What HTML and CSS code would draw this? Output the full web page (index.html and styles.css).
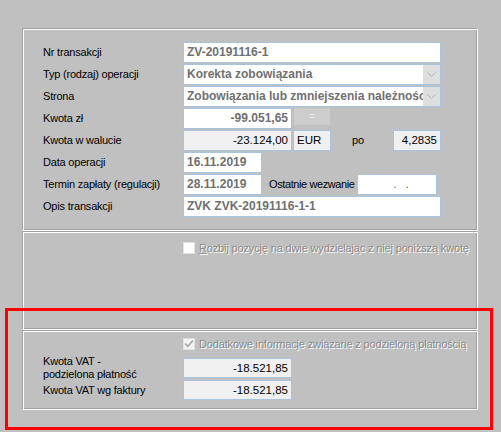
FILE: index.html
```html
<!DOCTYPE html>
<html lang="pl">
<head>
    <meta charset="utf-8">
    <link rel="stylesheet" href="styles.css">
</head>
<body>
    <div class="screen">
        <div class="panel panel-main">
            <div class="row">
                <span class="lbl">Nr transakcji</span>
                <div class="fld fld-full">ZV-20191116-1</div>
            </div>
            <div class="row">
                <span class="lbl">Typ (rodzaj) operacji</span>
                <div class="fld fld-full combo">
                    <span class="combo-text">Korekta zobowiązania</span>
                    <span class="combo-btn"><svg width="9" height="5" viewBox="0 0 9 5"><path d="M0.5 0.5 L4.5 4.5 L8.5 0.5" fill="none" stroke="#b4b4b4" stroke-width="1"/></svg></span>
                </div>
            </div>
            <div class="row">
                <span class="lbl">Strona</span>
                <div class="fld fld-full combo">
                    <span class="combo-text">Zobowiązania lub zmniejszenia należności</span>
                    <span class="combo-btn"><svg width="9" height="5" viewBox="0 0 9 5"><path d="M0.5 0.5 L4.5 4.5 L8.5 0.5" fill="none" stroke="#b4b4b4" stroke-width="1"/></svg></span>
                </div>
            </div>
            <div class="row">
                <span class="lbl">Kwota zł</span>
                <div class="fld fld-amount num">-99.051,65</div>
                <div class="eq-btn">=</div>
            </div>
            <div class="row">
                <span class="lbl">Kwota w walucie</span>
                <div class="fld fld-amount ro num">-23.124,00</div>
                <div class="fld fld-cur ro">EUR</div>
                <span class="po">po</span>
                <div class="fld fld-rate ro num">4,2835</div>
            </div>
            <div class="row">
                <span class="lbl">Data operacji</span>
                <div class="fld fld-date">16.11.2019</div>
            </div>
            <div class="row">
                <span class="lbl">Termin zapłaty (regulacji)</span>
                <div class="fld fld-date">28.11.2019</div>
                <span class="lbl-inline">Ostatnie wezwanie</span>
                <div class="fld fld-mask"><span>.</span><span>.</span></div>
            </div>
            <div class="row row-last">
                <span class="lbl">Opis transakcji</span>
                <div class="fld fld-full">ZVK ZVK-20191116-1-1</div>
            </div>
        </div>

        <div class="panel panel-split">
            <div class="check-row">
                <span class="chk"></span>
                <span class="dis-text"><u>R</u>ozbij pozycję na dwie wydzielając z niej poniższą kwotę</span>
            </div>
        </div>

        <div class="panel panel-vat">
            <div class="check-row">
                <span class="chk chk-on"><svg width="10" height="9" viewBox="0 0 10 9"><path d="M1 4.5 L3.8 7.3 L9 1.5" fill="none" stroke="#a8a8a8" stroke-width="1.6"/></svg></span>
                <span class="dis-text">Dodatkowe informacje związane z podzieloną płatnością</span>
            </div>
            <div class="vat-row">
                <span class="lbl">Kwota VAT -<br>podzielona płatność</span>
                <div class="fld fld-amount ro num">-18.521,85</div>
            </div>
            <div class="vat-row">
                <span class="lbl">Kwota VAT wg faktury</span>
                <div class="fld fld-amount ro num">-18.521,85</div>
            </div>
        </div>

        <div class="highlight"></div>
    </div>
</body>
</html>
```

FILE: styles.css
```css
/* Dialog: transakcja */
body {
    margin: 0;
    background-color: #c0c0c0;
    font-family: "Liberation Sans", Arial, sans-serif;
    font-size: 11px;
    color: #000;
}
.screen {
    position: relative;
    width: 501px;
    height: 432px;
    padding: 28px 0 0 22px;
    box-sizing: border-box;
}

/* etched frame */
.panel {
    width: 456px;
    box-sizing: border-box;
    border: 1px solid;
    border-color: #a0a0a0 #fff #fff #a0a0a0;
    box-shadow: inset 1px 1px 0 #fff, inset -1px -1px 0 #a0a0a0;
}
.panel-main {
    height: 203px;
    padding: 13px 0 0 20px;
}
.panel-split {
    height: 99px;
    padding: 9px 0 0 160px;
}
.panel-vat {
    height: 80px;
    padding: 6px 0 0 20px;
}

.row {
    display: flex;
    align-items: flex-start;
    height: 21px;
    margin-bottom: 1px;
}
.row-last {
    margin-top: 1px;
}
.lbl {
    width: 140px;
    flex-shrink: 0;
    line-height: 21px;
    letter-spacing: -0.2px;
}

/* fields */
.fld {
    box-sizing: border-box;
    height: 21px;
    border: 1px solid #a9c3de;
    background-color: #fff;
    padding: 0 3px;
    line-height: 19px;
    font-size: 12px;
    font-weight: bold;
    color: #707070;
    white-space: nowrap;
    overflow: hidden;
    flex-shrink: 0;
}
.fld.ro {
    background-color: #f0f0f0;
    font-weight: normal;
    color: #000;
    font-size: 11.5px;
}
.num {
    text-align: right;
}
.fld-full { width: 258px; }
.fld-amount { width: 109px; }
.fld-date { width: 79px; }
.fld-cur {
    width: 38px;
    margin-left: 1px;
}
.fld-rate { width: 48px; }
.fld-mask {
    width: 80px;
    display: flex;
    justify-content: center;
    gap: 9px;
    padding-left: 12px;
    font-weight: normal;
    color: #666;
}

.combo {
    display: flex;
    padding-right: 0;
}
.combo-text {
    flex: 1;
    overflow: hidden;
}
.combo-btn {
    width: 17px;
    height: 19px;
    background-color: #dedede;
    display: flex;
    align-items: center;
    justify-content: center;
}

.eq-btn {
    width: 36px;
    height: 17px;
    margin-left: 2px;
    background-color: #cdcdcd;
    color: #eaeaea;
    text-align: center;
    line-height: 17px;
    font-size: 11px;
}
.po {
    width: 62px;
    padding-left: 21px;
    box-sizing: border-box;
    line-height: 21px;
    font-size: 11px;
}
.lbl-inline {
    flex: none;
    padding: 0 2px 0 7px;
    line-height: 21px;
    letter-spacing: -0.4px;
    white-space: nowrap;
}

/* checkboxes */
.check-row {
    display: flex;
    align-items: center;
    height: 13px;
}
.panel-vat .check-row {
    margin-left: 140px;
    margin-bottom: 8px;
}
.chk {
    width: 12px;
    height: 12px;
    box-sizing: border-box;
    border: 1px solid #e0e0e0;
    background-color: #fff;
    margin-right: 4px;
    display: flex;
    align-items: center;
    justify-content: center;
}
.chk-on {
    background-color: #f4f4f4;
}
.dis-text {
    color: #8c8c8c;
    text-shadow: 1px 1px 0 #fff;
    letter-spacing: -0.15px;
    white-space: nowrap;
}
.dis-text u {
    text-decoration-color: #8c8c8c;
}

.vat-row {
    display: flex;
    align-items: center;
    height: 20px;
    margin-bottom: 2px;
}
.vat-row .lbl {
    line-height: 13px;
}
.vat-row .fld {
    height: 20px;
    line-height: 18px;
}

/* red marker */
.highlight {
    position: absolute;
    left: 5px;
    top: 308px;
    width: 488px;
    height: 122px;
    box-sizing: border-box;
    border: 3px solid #ff0000;
}
```
